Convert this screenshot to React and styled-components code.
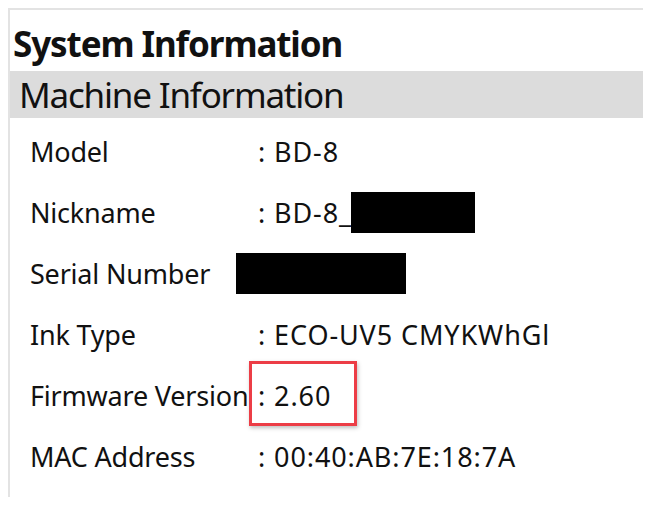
import React from "react";
import styled, { createGlobalStyle } from "styled-components";

const Global = createGlobalStyle`
  html, body { margin: 0; padding: 0; background: #fff; }
  body { font-family: "Noto Sans", "Open Sans", sans-serif; color: #111; }
`;

const Page = styled.div`
  width: 650px;
  height: 509px;
  padding: 8px 7px 12px 8px;
  box-sizing: border-box;
  overflow: hidden;
`;

const Panel = styled.div`
  border-top: 2px solid #e3e3e3;
  border-left: 2px solid #e3e3e3;
  height: 100%;
  box-sizing: border-box;
`;

const Title = styled.h1`
  margin: 0;
  padding: 12px 0 0 3px;
  height: 61px;
  box-sizing: border-box;
  font-size: 35px;
  font-weight: 700;
  line-height: 44px;
  letter-spacing: -1.1px;
`;

const SectionHeader = styled.div`
  background: #dcdcdc;
  height: 47px;
  padding-left: 9px;
  font-size: 35px;
  line-height: 48px;
  font-weight: 400;
  letter-spacing: -1.2px;
`;

const Rows = styled.div`
  display: flex;
  flex-direction: column;
  padding: 3px 0 0 20px;
`;

const Row = styled.div`
  display: grid;
  grid-template-columns: 228px 1fr;
  align-items: center;
  height: 61px;
  font-size: 27px;
`;

const Label = styled.span`
  letter-spacing: -0.2px;
`;

const Value = styled.span`
  display: flex;
  align-items: center;
  position: relative;
  letter-spacing: 0.9px;
`;

const Redact = styled.span`
  display: inline-block;
  background: #000;
  width: ${(p) => p.$w}px;
  height: 41px;
  margin-left: ${(p) => p.$ml || 0}px;
`;

const Highlight = styled.span`
  position: absolute;
  left: -9px;
  top: -16px;
  width: 102px;
  height: 59px;
  border: 3px solid #ec3d46;
  box-shadow: 1px 2px 4px rgba(0, 0, 0, 0.25);
`;

const rows = [
  { label: "Model", value: ": BD-8" },
  { label: "Nickname", value: ": BD-8_", redact: { w: 124, ml: -1 } },
  { label: "Serial Number", value: "", redact: { w: 170, ml: -22 } },
  { label: "Ink Type", value: ": ECO-UV5 CMYKWhGl" },
  { label: "Firmware Version", value: ": 2.60", highlight: true },
  { label: "MAC Address", value: ": 00:40:AB:7E:18:7A" },
];

export default function App() {
  return (
    <>
      <Global />
      <Page>
        <Panel>
          <Title>System Information</Title>
          <SectionHeader>Machine Information</SectionHeader>
          <Rows>
            {rows.map((r) => (
              <Row key={r.label}>
                <Label>{r.label}</Label>
                <Value>
                  {r.highlight && <Highlight />}
                  {r.value}
                  {r.redact && <Redact $w={r.redact.w} $ml={r.redact.ml} />}
                </Value>
              </Row>
            ))}
          </Rows>
        </Panel>
      </Page>
    </>
  );
}
